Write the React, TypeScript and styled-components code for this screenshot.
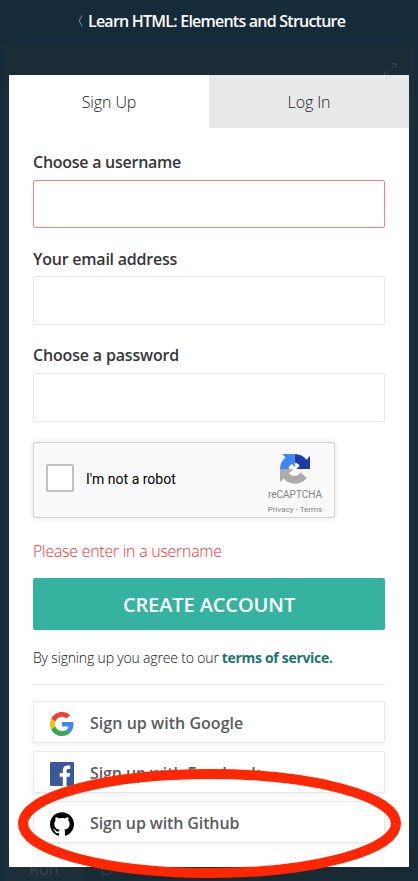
import React from "react";
import styled, { createGlobalStyle } from "styled-components";

const GlobalStyle = createGlobalStyle`
  * { box-sizing: border-box; }
  body { margin: 0; background: #162b39; font-family: "Open Sans", "Noto Sans", sans-serif; color: #363638; overflow: hidden; }
`;

const Page = styled.div`
  position: relative;
  width: 418px;
  height: 881px;
  display: flex;
  flex-direction: column;
  overflow: hidden;
  background: #162b39;
`;

const Header = styled.header`
  height: 45px;
  flex: none;
  display: flex;
  align-items: center;
  padding: 0 0 4px 78px;
  gap: 5px;
`;

const Title = styled.h1`
  margin: 0;
  white-space: nowrap;
  font-size: 16px;
  line-height: 24px;
  font-weight: 600;
  letter-spacing: -0.77px;
  color: #fff;
`;

const Workspace = styled.div`
  flex: 1;
  margin: 0 4px;
  display: flex;
  flex-direction: column;
  background: #1a303f;
`;

const Toolbar = styled.div`
  height: 45px;
  flex: none;
  display: flex;
  justify-content: flex-end;
  padding: 18px 17px 0 0;
  background: #1a2d37;
`;

const Editor = styled.div`
  flex: 1;
`;

const Footer = styled.div`
  height: 33px;
  flex: none;
  display: flex;
  background: #182b35;
`;

const Run = styled.div`
  width: 80px;
  padding: 10px 0 0 25px;
  font-size: 16px;
  line-height: 22px;
  color: #34444e;
  background: #1c2f39;
`;

const ResetIcon = styled.svg`
  margin: 14px 0 0 16px;
`;

const Overlay = styled.div`
  position: absolute;
  inset: 75px 9px 14px;
`;

const Modal = styled.section`
  height: 100%;
  background: #fff;
`;

const Tabs = styled.div`
  display: grid;
  grid-template-columns: 1fr 1fr;
  height: 53px;
`;

const Tab = styled.button<{ $active?: boolean }>`
  border: 0;
  padding: 0;
  font: 300 16px "Open Sans", sans-serif;
  letter-spacing: -0.1px;
  color: #202022;
  background: ${(p) => (p.$active ? "#fff" : "#e8eae9")};
`;

const Form = styled.div`
  padding: 23px 24px 0;
  display: flex;
  flex-direction: column;
`;

const Label = styled.label<{ $spacing: number; $drop?: boolean }>`
  height: 29px;
  padding-top: ${(p) => (p.$drop ? 1 : 0)}px;
  font-size: 16px;
  line-height: 22px;
  font-weight: 600;
  white-space: nowrap;
  letter-spacing: ${(p) => p.$spacing}px;
`;

const Input = styled.input<{ $invalid?: boolean }>`
  width: 100%;
  height: ${(p) => (p.$invalid ? 48 : 49)}px;
  margin-bottom: 19px;
  padding: 0 12px;
  border: 1px solid ${(p) => (p.$invalid ? "#f77e7e" : "#e8e8e8")};
  border-radius: 2px;
  outline: 0;
  background: #fff;
`;

const Captcha = styled.div`
  width: 302px;
  height: 76px;
  margin-top: 1px;
  display: flex;
  align-items: flex-start;
  border: 1px solid #d3d3d3;
  border-radius: 3px;
  background: #f9f9f9;
  box-shadow: 0 0 4px 1px rgba(0, 0, 0, 0.08);
  font-family: Roboto, sans-serif;
`;

const Checkbox = styled.span`
  width: 28px;
  height: 28px;
  margin: 21px 12px 0;
  border: 2px solid #c1c1c1;
  border-radius: 2px;
  background: #fff;
`;

const RobotText = styled.span`
  margin-top: 26px;
  width: 180px;
  font-size: 14px;
  line-height: 20px;
  color: #000;
`;

const Brand = styled.div`
  width: 58px;
  flex: none;
  display: flex;
  flex-direction: column;
  align-items: center;
  padding-top: 11px;
  color: #838383;
`;

const BrandName = styled.span`
  margin-top: 5px;
  font-size: 10px;
  line-height: 12px;
`;

const BrandLinks = styled.span`
  margin-top: 4px;
  font-size: 8px;
  line-height: 10px;
  white-space: nowrap;
`;

const ErrorText = styled.p`
  margin: 22px 0 0;
  font-size: 16px;
  line-height: 22px;
  height: 38px;
  font-weight: 300;
  white-space: nowrap;
  letter-spacing: -0.28px;
  color: #f03038;
`;

const Submit = styled.button`
  width: 100%;
  height: 52px;
  border: 0;
  border-radius: 2px;
  font: 600 20px "Open Sans", sans-serif;
  letter-spacing: -0.1px;
  color: #fff;
  background: #36b3a0;
`;

const Terms = styled.p`
  margin: 0;
  height: 55px;
  padding-top: 18px;
  display: flex;
  gap: 3px;
  font-size: 14px;
  line-height: 20px;
  font-weight: 300;
  letter-spacing: -0.17px;
  white-space: nowrap;
  color: #101010;
  border-bottom: 1px solid #e7e7e7;
`;

const TermsLink = styled.a`
  font-weight: 700;
  letter-spacing: -0.3px;
  color: #217269;
`;

const SocialList = styled.div`
  display: flex;
  flex-direction: column;
  gap: 8px;
  margin-top: 16px;
`;

const SocialButton = styled.button<{ $spacing: number }>`
  height: 42px;
  display: flex;
  align-items: center;
  gap: 16px;
  padding: 2px 0 0 16px;
  border: 1px solid #e8e8e8;
  border-radius: 2px;
  background: #fff;
  box-shadow: 0 2px 6px rgba(0, 0, 0, 0.06);
  font: 600 16px "Open Sans", sans-serif;
  letter-spacing: ${(p) => p.$spacing}px;
  white-space: nowrap;
  color: #5b5b5e;

  svg {
    margin-top: 2px;
  }
`;

const Highlight = styled.svg`
  position: absolute;
  left: 0;
  top: 761px;
`;

const GoogleIcon = () => (
  <svg width="24" height="24" viewBox="0 0 48 48">
    <path fill="#EA4335" d="M24 9.5c3.54 0 6.71 1.22 9.21 3.6l6.85-6.85C35.9 2.38 30.47 0 24 0 14.62 0 6.51 5.38 2.56 13.22l7.98 6.19C12.43 13.72 17.74 9.5 24 9.5z" />
    <path fill="#4285F4" d="M46.98 24.55c0-1.57-.15-3.09-.38-4.55H24v9.02h12.94c-.58 2.96-2.26 5.48-4.78 7.18l7.73 6c4.51-4.18 7.09-10.36 7.09-17.65z" />
    <path fill="#FBBC05" d="M10.53 28.59A14.5 14.5 0 0 1 10.53 19.41l-7.98-6.19a24 24 0 0 0 0 21.56z" />
    <path fill="#34A853" d="M24 48c6.48 0 11.93-2.13 15.89-5.81l-7.73-6c-2.15 1.45-4.92 2.3-8.16 2.3-6.26 0-11.57-4.22-13.47-9.91l-7.98 6.19C6.51 42.62 14.62 48 24 48z" />
  </svg>
);

const FacebookIcon = () => (
  <svg width="24" height="24" viewBox="0 0 24 24">
    <path fill="#3b5998" d="M22.68 0H1.32C.59 0 0 .59 0 1.32v21.36C0 23.41.59 24 1.32 24h11.5v-9.29H9.69v-3.62h3.13V8.41c0-3.1 1.89-4.79 4.66-4.79 1.32 0 2.46.1 2.79.14v3.24h-1.92c-1.5 0-1.79.71-1.79 1.76v2.33h3.58l-.46 3.62h-3.12V24h6.12c.73 0 1.32-.59 1.32-1.32V1.32C24 .59 23.41 0 22.68 0z" />
  </svg>
);

const GithubIcon = () => (
  <svg width="24" height="24" viewBox="0 0 24 24">
    <path d="M12 .297c-6.63 0-12 5.373-12 12 0 5.303 3.438 9.8 8.205 11.385.6.113.82-.258.82-.577 0-.285-.01-1.04-.015-2.04-3.338.724-4.042-1.61-4.042-1.61C4.422 18.07 3.633 17.7 3.633 17.7c-1.087-.744.084-.729.084-.729 1.205.084 1.838 1.236 1.838 1.236 1.07 1.835 2.809 1.305 3.495.998.108-.776.417-1.305.76-1.605-2.665-.3-5.466-1.332-5.466-5.93 0-1.31.465-2.38 1.235-3.22-.135-.303-.54-1.523.105-3.176 0 0 1.005-.322 3.3 1.23.96-.267 1.98-.399 3-.405 1.02.006 2.04.138 3 .405 2.28-1.552 3.285-1.23 3.285-1.23.645 1.653.24 2.873.12 3.176.765.84 1.23 1.91 1.23 3.22 0 4.61-2.805 5.625-5.475 5.92.42.36.81 1.096.81 2.22 0 1.606-.015 2.896-.015 3.286 0 .315.21.69.825.57C20.565 22.092 24 17.592 24 12.297c0-6.627-5.373-12-12-12" />
  </svg>
);

const CaptchaIcon = () => (
  <svg width="30" height="30" viewBox="0 0 64 64">
    <path fill="#1c3aa9" d="M64 32V4.5l-7.6 7.6A32 32 0 0 0 31.7 0v18.5c2.5-.1 4.8.8 6.2 2.1 1.7 1.1 3 2.7 4 4.7L35.2 32H64z" />
    <path fill="#4285f4" d="M31.7 0H4.3l7.8 7.7A32 32 0 0 0 0 32h18.8c-.2-2.8.6-5.1 1.9-6.7 1.2-1.7 2.8-3 4.7-3.9l6.3 6.4z" />
    <path fill="#ababab" d="M0 32v27.7l7.6-7.6a32 32 0 0 0 49.3-.6L44 38.7c-1.2 2.3-3 4.1-5.1 5.3-2.2 1.7-5.3 3.1-9.6 2.6-4.2-.3-8-2.8-10-5.6L28.5 32z" />
  </svg>
);

export default function App() {
  return (
    <Page>
      <GlobalStyle />
      <Header>
        <svg width="5" height="12" viewBox="0 0 5 12" fill="none" stroke="#82909a">
          <path d="M4 .5 1.2 5.8 4 11.2" />
        </svg>
        <Title>Learn HTML: Elements and Structure</Title>
      </Header>
      <Workspace>
        <Toolbar>
          <svg width="13" height="13" viewBox="0 0 13 13" fill="none" stroke="#344852">
            <path d="M8 .5h4.5V5M12 1 8 5M.5 8v4.5H5M1 12l4-4" />
          </svg>
        </Toolbar>
        <Editor />
        <Footer>
          <Run>Run</Run>
          <ResetIcon width="14" height="14" viewBox="0 0 14 14" fill="none" stroke="#34444e">
            <path d="M2 10A6 6 0 0 1 11 2.5M12 4a6 6 0 0 1-9 7.5M8.5 3H12V0M5 11H2v3" />
          </ResetIcon>
        </Footer>
      </Workspace>
      <Overlay>
        <Modal>
          <Tabs>
            <Tab $active>Sign Up</Tab>
            <Tab>Log In</Tab>
          </Tabs>
          <Form>
            <Label $spacing={-0.26} htmlFor="username">Choose a username</Label>
            <Input id="username" $invalid />
            <Label $spacing={-0.23} $drop htmlFor="email">Your email address</Label>
            <Input id="email" />
            <Label $spacing={-0.17} htmlFor="password">Choose a password</Label>
            <Input id="password" type="password" />
            <Captcha>
              <Checkbox />
              <RobotText>I'm not a robot</RobotText>
              <Brand>
                <CaptchaIcon />
                <BrandName>reCAPTCHA</BrandName>
                <BrandLinks>Privacy - Terms</BrandLinks>
              </Brand>
            </Captcha>
            <ErrorText>Please enter in a username</ErrorText>
            <Submit>CREATE ACCOUNT</Submit>
            <Terms>
              <span>By signing up you agree to our</span>
              <TermsLink>terms of service.</TermsLink>
            </Terms>
            <SocialList>
              <SocialButton $spacing={0.04}><GoogleIcon />Sign up with Google</SocialButton>
              <SocialButton $spacing={-0.1}><FacebookIcon />Sign up with Facebook</SocialButton>
              <SocialButton $spacing={-0.12}><GithubIcon />Sign up with Github</SocialButton>
            </SocialList>
          </Form>
        </Modal>
      </Overlay>
      <Highlight width="418" height="120" viewBox="0 0 418 120" fill="none" stroke="#ff2600" strokeWidth="10">
        <ellipse cx="209.5" cy="62.5" rx="186.5" ry="49.5" />
      </Highlight>
    </Page>
  );
}
